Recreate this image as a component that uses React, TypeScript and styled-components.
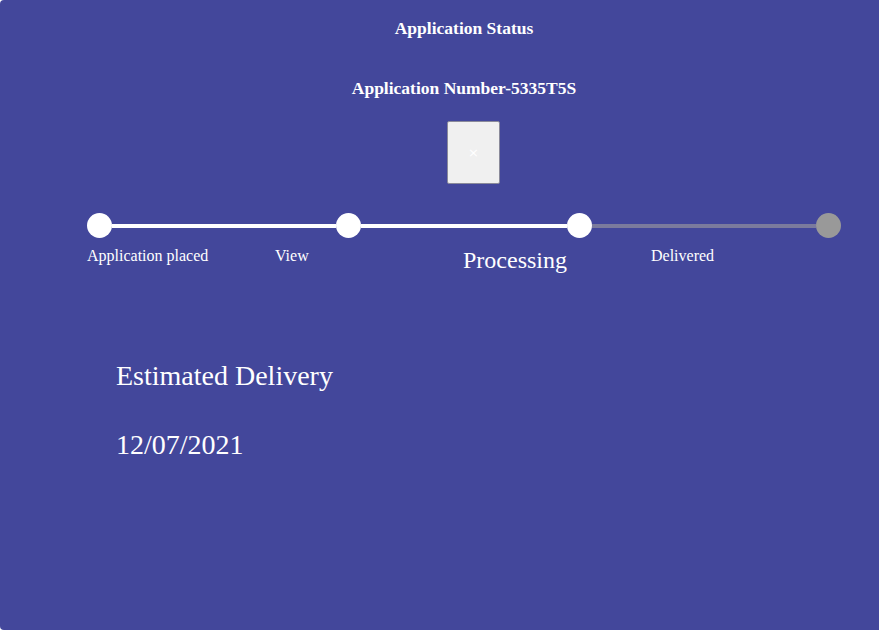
import styled, { createGlobalStyle } from "styled-components";

const GlobalStyle = createGlobalStyle`
  body {
    margin: 0;
    background: #ffffff;
    overflow: hidden;
    font-family: "Liberation Serif", "Times New Roman", serif;
  }
`;

interface Step {
  label: string;
  done: boolean;
  current?: boolean;
  // distance to the next dot, in px
  gap?: number;
}

const steps: Step[] = [
  { label: "Application placed", done: true, gap: 224 },
  { label: "View", done: true, gap: 206 },
  { label: "Processing", done: true, current: true, gap: 224 },
  { label: "Delivered", done: false },
];

const App: React.FC = () => {
  return (
    <>
      <GlobalStyle />
      <Card>
        <Title>Application Status</Title>
        <Title $top={40}>Application Number-5335T5S</Title>

        <ImageRow>
          <Broken>×</Broken>
        </ImageRow>

        <Stepper>
          <Track>
            {steps.map((s, i) => (
              <Segment key={s.label}>
                <Dot $done={s.done} />
                {s.gap && <Line $done={steps[i + 1].done} style={{ width: s.gap }} />}
              </Segment>
            ))}
          </Track>
          <Labels>
            {steps.map((s) => (
              <Label key={s.label} $current={s.current}>
                {s.label}
              </Label>
            ))}
          </Labels>
        </Stepper>

        <Delivery>
          <Big>Estimated Delivery</Big>
          <Big $top={37}>12/07/2021</Big>
        </Delivery>
      </Card>
    </>
  );
};

export default App;

const Card = styled.div`
  width: 100%;
  height: 630px;
  box-sizing: border-box;
  padding: 18px 0 0 49px;
  background-color: #43479b;
  border-radius: 4px 0 0 4px;
  color: #ffffff;
`;

const Title = styled.div<{ $top?: number }>`
  margin-top: ${({ $top }) => $top ?? 0}px;
  text-align: center;
  font-size: 17.5px;
  font-weight: 700;
  line-height: 20px;
`;

const ImageRow = styled.div`
  display: flex;
  justify-content: center;
  margin-top: 23px;
`;

const Broken = styled.div`
  width: 53px;
  height: 63px;
  box-sizing: border-box;
  margin-left: 19px;
  display: flex;
  align-items: center;
  justify-content: center;
  background: #f0f0f0;
  border: 1px solid #8a8a9a;
  border-radius: 2px;
  color: #ffffff;
  font-family: "DejaVu Sans", sans-serif;
  font-size: 13px;
`;

const Stepper = styled.div`
  margin: 29px 38px 0 38px;
`;

const Track = styled.div`
  display: flex;
  align-items: center;
  height: 25px;
`;

const Segment = styled.div`
  display: flex;
  align-items: center;
`;

const Dot = styled.div<{ $done: boolean }>`
  width: 25px;
  height: 25px;
  border-radius: 50%;
  flex-shrink: 0;
  background: ${({ $done }) => ($done ? "#ffffff" : "#999999")};
`;

const Line = styled.div<{ $done: boolean }>`
  height: 4px;
  background: ${({ $done }) => ($done ? "#ffffff" : "#7b7b9d")};
`;

const Labels = styled.div`
  display: grid;
  grid-template-columns: repeat(4, 188px);
  align-items: start;
  margin-top: 9px;
`;

const Label = styled.div<{ $current?: boolean }>`
  font-size: ${({ $current }) => ($current ? "24px" : "16px")};
  line-height: ${({ $current }) => ($current ? "27px" : "18px")};
`;

const Delivery = styled.div`
  padding: 86px 0 0 67px;
`;

const Big = styled.div<{ $top?: number }>`
  margin-top: ${({ $top }) => $top ?? 0}px;
  font-size: 28px;
  line-height: 32px;
`;
